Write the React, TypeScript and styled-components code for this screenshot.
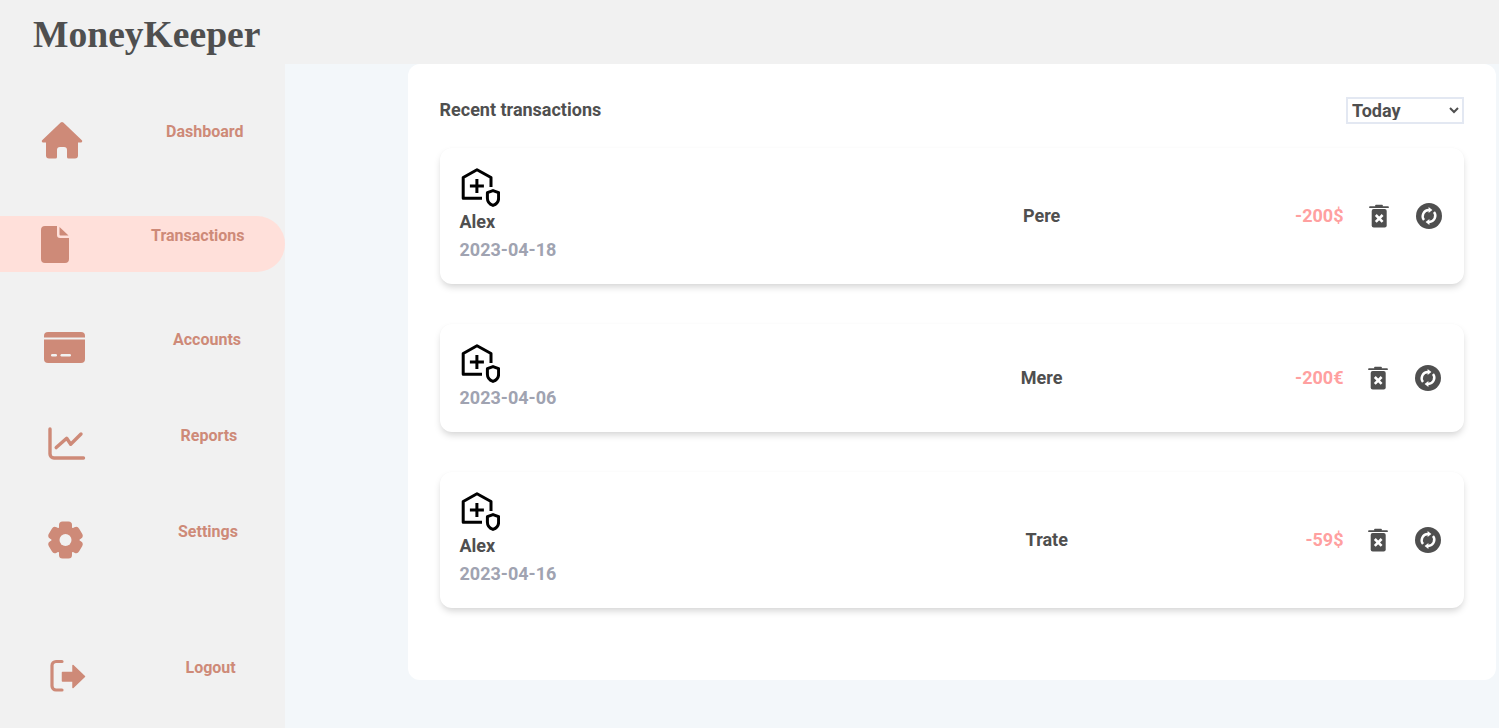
import React from "react";
import styled, { createGlobalStyle } from "styled-components";

const Global = createGlobalStyle`
  html, body { margin: 0; padding: 0; }
  body { background: #f3f7fa; font-family: Roboto, "Liberation Sans", sans-serif; overflow: hidden; }
  * { box-sizing: border-box; }
`;

const Page = styled.div`
  width: 1499px;
  height: 728px;
  display: flex;
  flex-direction: column;
`;
const Header = styled.header`
  height: 64px;
  flex: none;
  background: #f1f1f1;
  padding-left: 33px;
  display: flex;
  align-items: center;
`;
const Logo = styled.h1`
  margin: 4px 0 0;
  font-family: "Liberation Serif", serif;
  font-size: 37.6px;
  font-weight: 700;
  color: #4f4f4f;
`;
const Body = styled.div`
  flex: 1;
  display: flex;
  min-height: 0;
`;
const Sidebar = styled.nav`
  width: 285px;
  flex: none;
  background: #f1f1f1;
  padding-top: 48px;
  display: flex;
  flex-direction: column;
`;
const NavRow = styled.a<{ $top: number; $active?: boolean }>`
  height: 56px;
  flex: none;
  margin-top: ${(p) => p.$top}px;
  border-radius: ${(p) => (p.$active ? "0 28px 28px 0" : "0")};
  background: ${(p) => (p.$active ? "#ffe0da" : "transparent")};
  color: #ce8a78;
  display: flex;
  align-items: center;
`;
const NavIcon = styled.span<{ $left: number }>`
  flex: none;
  width: 140px;
  display: flex;
  padding-left: ${(p) => p.$left}px;
`;
const NavLabel = styled.span<{ $left: number }>`
  align-self: flex-start;
  margin: 10px 0 0 ${(p) => p.$left - 140}px;
  font-size: 16px;
  line-height: 19px;
  font-weight: 700;
`;
const Main = styled.main`
  flex: 1;
  background: #f3f7fa;
  padding: 0 3px 48px 123px;
  display: flex;
`;
const Panel = styled.section`
  flex: 1;
  background: #fff;
  border-radius: 12px;
  padding: 32px 32px 0;
`;
const PanelHead = styled.div`
  display: flex;
  justify-content: space-between;
  align-items: center;
  height: 28px;
  margin-bottom: 24px;
`;
const Title = styled.h2`
  margin: 0 0 0 -0.5px;
  font-size: 18px;
  line-height: 21px;
  padding-bottom: 1px;
  font-weight: 700;
  color: #4f4f4f;
`;
const Select = styled.select`
  width: 118px;
  height: 27px;
  margin-top: 1px;
  padding: 0 0 2px;
  border: 2px solid #e3e8f2;
  border-radius: 0;
  background: #fff;
  color: #4f4f4f;
  font: 700 18px Roboto, sans-serif;
`;
const List = styled.div`
  display: flex;
  flex-direction: column;
  gap: 40px;
`;
const Card = styled.article`
  display: flex;
  align-items: center;
  padding: 20px 20px 20px 19.5px;
  border-radius: 12px;
  background: #fff;
  box-shadow: 0 4px 7px -1px rgba(0, 0, 0, 0.17), 0 0 2px rgba(0, 0, 0, 0.02);
`;
const Who = styled.div`
  flex: 0 0 33.33%;
  display: flex;
  flex-direction: column;
`;
const WhoIcon = styled.svg`
  display: block;
  width: 40px;
  height: 40px;
`;
const Person = styled.div`
  font-size: 18px;
  font-weight: 700;
  line-height: 28px;
  color: #4f4f4f;
`;
const DateText = styled.div`
  font-size: 18px;
  font-weight: 700;
  line-height: 28px;
  color: #a0a3b1;
`;
const Name = styled.div`
  flex: 1;
  text-align: center;
  font-size: 18px;
  line-height: 21px;
  padding-bottom: 1px;
  font-weight: 700;
  color: #4f4f4f;
`;
const Actions = styled.div<{ $tight?: boolean }>`
  flex: none;
  display: flex;
  align-items: center;
  margin-right: ${(p) => (p.$tight ? 3 : 2)}px;
`;
const Amount = styled.div`
  font-size: 18px;
  line-height: 21px;
  padding-bottom: 1px;
  margin-left: -0.5px;
  font-weight: 700;
  color: #ffa0a0;
`;
const TrashIcon = styled.svg<{ $tight?: boolean }>`
  display: block;
  width: 20px;
  height: 24px;
  margin-left: ${(p) => (p.$tight ? 24.5 : 25.5)}px;
`;
const SyncIcon = styled.svg`
  display: block;
  width: 26px;
  height: 26px;
  margin-left: 27px;
`;

const Home = () => (
  <svg width="42" height="39" viewBox="0 0 42 39" fill="currentColor">
    <path d="M19.7 1.6a2 2 0 0 1 2.6 0L40.6 19a1.3 1.3 0 0 1-.9 2.4H37V34.5a3 3 0 0 1-3 3H27.5a1.5 1.5 0 0 1-1.5-1.5V29a3 3 0 0 0-3-3h-4a3 3 0 0 0-3 3v7a1.5 1.5 0 0 1-1.5 1.5H8a3 3 0 0 1-3-3V21.4H2.3a1.3 1.3 0 0 1-.9-2.4z" />
  </svg>
);
const FileDoc = () => (
  <svg width="28" height="37" viewBox="0 0 28 37" fill="currentColor">
    <path d="M4 0H16V9a3 3 0 0 0 3 3H28V33a4 4 0 0 1-4 4H4a4 4 0 0 1-4-4V4a4 4 0 0 1 4-4z" />
    <path d="M18.5 1L27.5 9.5H19.5a1 1 0 0 1-1-1z" />
  </svg>
);
const CreditCard = () => (
  <svg width="41" height="32" viewBox="0 0 41 32" fill="currentColor">
    <path d="M4 0H37a4 4 0 0 1 4 4v1.5H0V4a4 4 0 0 1 4-4z" />
    <path d="M0 7.5H41V27a4 4 0 0 1-4 4H4a4 4 0 0 1-4-4z" />
    <rect x="7" y="22" width="6" height="2.4" rx="1.2" fill="#f1f1f1" />
    <rect x="16.5" y="22" width="10.5" height="2.4" rx="1.2" fill="#f1f1f1" />
  </svg>
);
const Chart = () => (
  <svg width="38" height="34" viewBox="0 0 38 34" fill="none" stroke="currentColor" strokeWidth="3.4" strokeLinecap="round" strokeLinejoin="round">
    <path d="M2 2V27a4 4 0 0 0 4 4H35.5" />
    <path d="M8.2 20.6L18.7 11.3L22.7 17.3L33 7" />
  </svg>
);
const Gear = () => (
  <svg width="35" height="38" viewBox="-17.5 -19 35 38" fill="currentColor">
    <circle r="14" />
    <rect x="-6.5" y="-18.5" width="13" height="37" rx="3.5" />
    <rect x="-6.5" y="-17.5" width="13" height="35" rx="3.5" transform="rotate(60)" />
    <rect x="-6.5" y="-17.5" width="13" height="35" rx="3.5" transform="rotate(120)" />
    <circle r="6" fill="#f1f1f1" />
  </svg>
);
const Logout = () => (
  <svg width="36" height="34" viewBox="0 0 36 34" fill="currentColor">
    <path d="M12 2.5H6a4 4 0 0 0-4 4V27a4 4 0 0 0 4 4H12" fill="none" stroke="currentColor" strokeWidth="3.2" strokeLinecap="round" />
    <path d="M12.5 13.5H23V6.5L34.5 17.5L23 28.5V22H12.5z" stroke="currentColor" strokeWidth="1.5" strokeLinejoin="round" />
  </svg>
);
const HouseShield = () => (
  <WhoIcon viewBox="0 0 40 40" fill="none" stroke="#000" strokeWidth="3" strokeLinejoin="round">
    <path d="M22 30.3H3.2V9.5L17 1.8L31 9.5V19" />
    <path d="M16.9 11V25M9.9 18H23.9" />
    <path d="M33 22.6l5.6 2.1v5.5c0 3.4-2.4 6-5.6 7.2c-3.2-1.2-5.6-3.8-5.6-7.2v-5.5z" />
  </WhoIcon>
);
const Trash = ({ tight }: { tight?: boolean }) => (
  <TrashIcon $tight={tight} viewBox="0 0 20 24">
    <path d="M7 1.6H13M1 3.2H19" stroke="#4f4f4f" strokeWidth="1.8" strokeLinecap="round" fill="none" />
    <rect x="2.7" y="5" width="15" height="18.4" rx="2" fill="#4f4f4f" />
    <path d="M6.8 11L13.6 17.8M13.6 11L6.8 17.8" stroke="#fff" strokeWidth="2.6" />
  </TrashIcon>
);
const Sync = () => (
  <SyncIcon viewBox="0 0 26 26">
    <circle cx="13" cy="13" r="13" fill="#4f4f4f" />
    <g fill="none" stroke="#fff" strokeWidth="2.4">
      <path d="M8 17A6.2 6.2 0 0 1 13 7" />
      <path d="M18 9A6.2 6.2 0 0 1 13 19" />
    </g>
    <path d="M12.6 4L16.4 7L12.6 10zM13.4 22L9.6 19L13.4 16z" fill="#fff" />
  </SyncIcon>
);

const nav = [
  { label: "Dashboard", icon: <Home />, iconLeft: 41, top: 0, labelLeft: 166 },
  { label: "Transactions", icon: <FileDoc />, iconLeft: 41, top: 48, labelLeft: 151, active: true },
  { label: "Accounts", icon: <CreditCard />, iconLeft: 44, top: 48, labelLeft: 173 },
  { label: "Reports", icon: <Chart />, iconLeft: 48, top: 40, labelLeft: 180.5 },
  { label: "Settings", icon: <Gear />, iconLeft: 48, top: 40, labelLeft: 178 },
  { label: "Logout", icon: <Logout />, iconLeft: 50, top: 80, labelLeft: 185.5 },
];

const rows = [
  { person: "Alex", date: "2023-04-18", name: "Pere", amount: "-200$" },
  { date: "2023-04-06", name: "Mere", amount: "-200€", tight: true },
  { person: "Alex", date: "2023-04-16", name: "Trate", amount: "-59$", tight: true },
];

export default function App() {
  return (
    <Page>
      <Global />
      <Header>
        <Logo>MoneyKeeper</Logo>
      </Header>
      <Body>
        <Sidebar>
          {nav.map((n) => (
            <NavRow key={n.label} $top={n.top} $active={n.active}>
              <NavIcon $left={n.iconLeft}>{n.icon}</NavIcon>
              <NavLabel $left={n.labelLeft}>{n.label}</NavLabel>
            </NavRow>
          ))}
        </Sidebar>
        <Main>
          <Panel>
            <PanelHead>
              <Title>Recent transactions</Title>
              <Select defaultValue="Today">
                <option>Today</option>
                <option>This week</option>
                <option>This month</option>
              </Select>
            </PanelHead>
            <List>
              {rows.map((r) => (
                <Card key={r.date}>
                  <Who>
                    <HouseShield />
                    {r.person && <Person>{r.person}</Person>}
                    <DateText>{r.date}</DateText>
                  </Who>
                  <Name>{r.name}</Name>
                  <Actions $tight={r.tight}>
                    <Amount>{r.amount}</Amount>
                    <Trash tight={r.tight} />
                    <Sync />
                  </Actions>
                </Card>
              ))}
            </List>
          </Panel>
        </Main>
      </Body>
    </Page>
  );
}
